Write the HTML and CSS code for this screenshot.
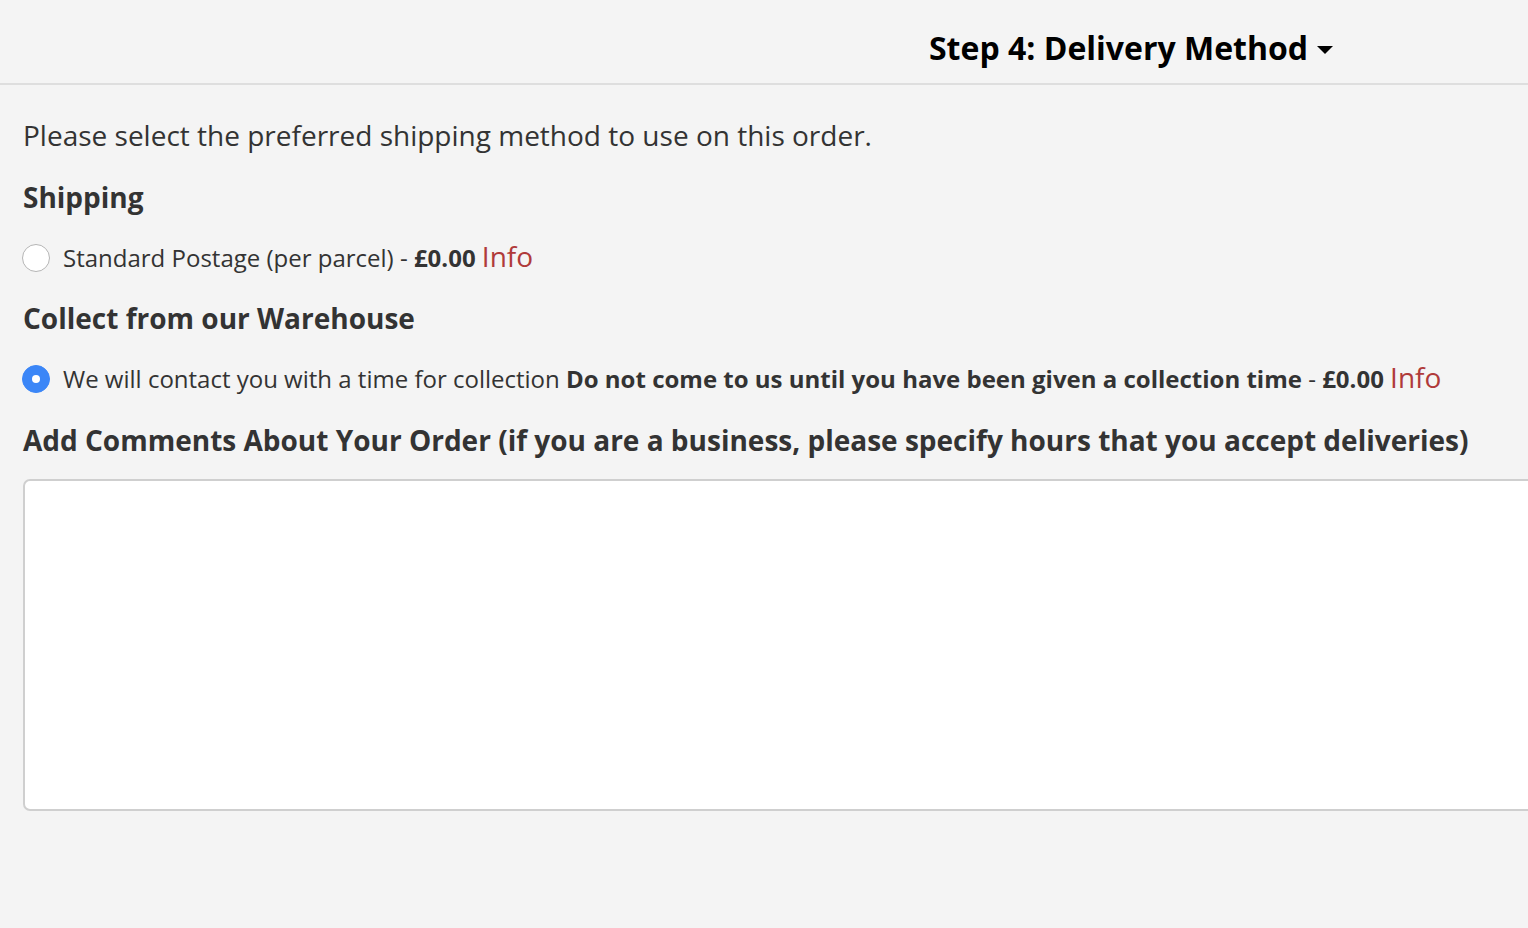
FILE: index.html
```html
<!DOCTYPE html>
<html lang="en">
<head>
<meta charset="utf-8">
<title>Step 4: Delivery Method</title>
<link rel="stylesheet" href="styles.css">
</head>
<body>
<div class="page">
  <header class="step-header">
    <h2 class="step-title">Step 4: Delivery Method <span class="caret"></span></h2>
  </header>
  <section class="step-body">
    <p class="intro">Please select the preferred shipping method to use on this order.</p>
    <h3 class="group-title">Shipping</h3>
    <label class="option">
      <span class="radio"></span>
      <span class="option-text">Standard Postage (per parcel) - <b>£0.00</b> <a class="info" href="#">Info</a></span>
    </label>
    <h3 class="group-title">Collect from our Warehouse</h3>
    <label class="option">
      <span class="radio checked"></span>
      <span class="option-text">We will contact you with a time for collection <b>Do not come to us until you have been given a collection time</b> - <b>£0.00</b> <a class="info" href="#">Info</a></span>
    </label>
    <h3 class="comments-title">Add Comments About Your Order (if you are a business, please specify hours that you accept deliveries)</h3>
    <textarea class="comments"></textarea>
  </section>
</div>
</body>
</html>
```

FILE: styles.css
```css
html, body {
  margin: 0;
  padding: 0;
  background: #f4f4f4;
  overflow: hidden;
}
body {
  font-family: "Open Sans", "Liberation Sans", sans-serif;
  color: #333;
}
.page {
  width: 2262px;
}
.step-header {
  box-sizing: border-box;
  height: 85px;
  padding-top: 12px;
  border-bottom: 2px solid #dedede;
  display: flex;
  align-items: center;
  justify-content: center;
}
.step-title {
  margin: 0;
  font-size: 32px;
  font-weight: 700;
  color: #000;
  display: flex;
  align-items: center;
  gap: 9px;
}
.caret {
  width: 0;
  height: 0;
  border-left: 8px solid transparent;
  border-right: 8px solid transparent;
  border-top: 8px solid #000;
  margin-top: 4px;
}
.step-body {
  padding: 0 0 0 23px;
}
.intro {
  margin: 0;
  padding-top: 32px;
  font-size: 28px;
  line-height: 36px;
}
.group-title {
  margin: 0;
  padding-top: 26px;
  font-size: 28px;
  font-weight: 700;
  line-height: 36px;
}
.option {
  display: flex;
  align-items: center;
  gap: 13px;
  margin-top: 27px;
  font-size: 24px;
  line-height: 32px;
}
.option b {
  font-weight: 700;
}
.radio {
  flex: none;
  width: 28px;
  height: 28px;
  border-radius: 50%;
  background: #fff;
  border: 1px solid #b5b5b5;
  box-sizing: border-box;
  margin-left: -1px;
}
.radio.checked {
  background: #3b86f7;
  border-color: #3b86f7;
  display: flex;
  align-items: center;
  justify-content: center;
}
.radio.checked::after {
  content: "";
  width: 8px;
  height: 8px;
  border-radius: 50%;
  background: #fff;
}
.info {
  color: #b03a3a;
  text-decoration: none;
  font-size: 28px;
  line-height: 1;
}
.comments-title {
  margin: 0;
  padding-top: 27px;
  font-size: 28px;
  font-weight: 700;
  line-height: 36px;
}
.comments {
  display: block;
  margin-top: 21px;
  width: 2215px;
  height: 332px;
  box-sizing: border-box;
  background: #fff;
  border: 2px solid #cfcfcf;
  border-radius: 7px;
  resize: none;
}
```
